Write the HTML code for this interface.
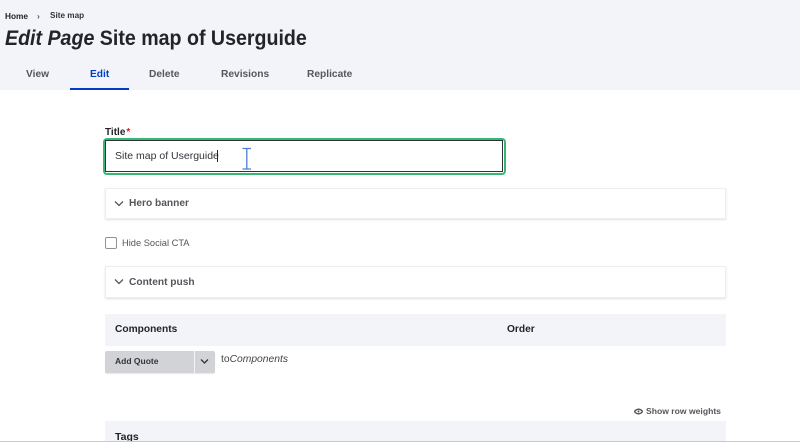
<!DOCTYPE html>
<html><head><meta charset="utf-8"><style>
html,body{margin:0;padding:0;width:800px;height:442px;overflow:hidden;background:#fff;font-family:"Liberation Sans",sans-serif;color:#232429}
.a{position:absolute;white-space:nowrap}
.panel{position:absolute;left:105px;width:621px;background:#fff;border:1px solid #eeeef1;box-shadow:0 1px 2px rgba(0,0,0,.12);box-sizing:border-box}
.sum{font-weight:bold;font-size:10.200px;color:#55565b}
.tab{font-weight:bold;font-size:10.200px;color:#55565b;top:69px}
</style></head><body>
<div class="a" style="left:0;top:0;width:800px;height:90px;background:#f3f4f9"></div>
<div class="a" style="left:5px;top:11px;font-size:8.300px;font-weight:bold;color:#232429">Home</div>
<div class="a" style="left:37px;top:11px;font-size:8.500px;font-weight:bold;color:#55565b">›</div>
<div class="a" style="left:50px;top:11px;font-size:8.200px;font-weight:bold;color:#33343a">Site map</div>
<div class="a" style="left:5px;top:24px;font-size:21.500px;line-height:28px;font-weight:bold;color:#232429;transform:scaleX(.912);transform-origin:0 0"><i>Edit Page</i> Site map of Userguide</div>
<div class="a tab" style="left:26px">View</div>
<div class="a tab" style="left:90px;color:#003cc5">Edit</div>
<div class="a tab" style="left:149px">Delete</div>
<div class="a tab" style="left:221px">Revisions</div>
<div class="a tab" style="left:307px">Replicate</div>
<div class="a" style="left:70px;top:88px;width:59px;height:2px;background:#003cc5"></div>

<div class="a" style="left:105px;top:127px;font-size:10px;font-weight:bold;color:#232429">Title<span style="color:#d72222;margin-left:1px">*</span></div>
<div class="a" style="left:103px;top:138px;width:403px;height:37px;box-sizing:border-box;border:2px solid #35b872;border-radius:4px;background:#fff"></div>
<div class="a" style="left:105px;top:140px;width:398px;height:32px;box-sizing:border-box;border:1.500px solid #2f2f35;background:#fff"></div>
<div class="a" style="left:115px;top:150px;font-size:10.500px;color:#33343a">Site map of Userguide</div>
<div class="a" style="left:217px;top:150px;width:1px;height:12px;background:#222"></div>
<svg class="a" style="left:240px;top:147px" width="14" height="24" viewBox="0 0 14 24"><path d="M2.500 1.500H11M2.500 22H11M6.800 1.500V22" stroke="#4d7fd0" stroke-width="1.300" fill="none"/></svg>

<div class="panel" style="top:188px;height:31px"></div>
<svg class="a" style="left:114px;top:200px" width="10" height="8" viewBox="0 0 10 8"><path d="M1 1.500L5 5.500L9 1.500" stroke="#55565b" stroke-width="1.300" fill="none"/></svg>
<div class="a sum" style="left:129px;top:198px">Hero banner</div>

<div class="a" style="left:105px;top:237px;width:12px;height:12px;box-sizing:border-box;border:1px solid #919297;border-radius:2px;background:#fff"></div>
<div class="a" style="left:122px;top:238px;font-size:9.300px;color:#55565b">Hide Social CTA</div>

<div class="panel" style="top:266px;height:32px"></div>
<svg class="a" style="left:114px;top:278px" width="10" height="8" viewBox="0 0 10 8"><path d="M1 1.500L5 5.500L9 1.500" stroke="#55565b" stroke-width="1.300" fill="none"/></svg>
<div class="a sum" style="left:129px;top:277px">Content push</div>

<div class="a" style="left:105px;top:314px;width:621px;height:32px;background:#f3f4f9"></div>
<div class="a" style="left:115px;top:324px;font-size:10.200px;font-weight:bold;color:#232429">Components</div>
<div class="a" style="left:507px;top:324px;font-size:10.200px;font-weight:bold;color:#232429">Order</div>

<div class="a" style="left:105px;top:351px;width:110px;height:22px;background:#d2d3d7;border-radius:2px;box-shadow:0 1px 1px rgba(0,0,0,.1)"></div>
<div class="a" style="left:194px;top:351px;width:1px;height:22px;background:#f3f4f9"></div>
<div class="a" style="left:115px;top:356px;font-size:8.500px;font-weight:bold;color:#33343a">Add Quote</div>
<svg class="a" style="left:200px;top:358px" width="9" height="7" viewBox="0 0 9 7"><path d="M1 1.500L4.500 5L8 1.500" stroke="#33343a" stroke-width="1.300" fill="none"/></svg>
<div class="a" style="left:221px;top:354px;font-size:10.300px;color:#44454a">to<i>Components</i></div>

<svg class="a" style="left:634px;top:408px" width="9" height="7" viewBox="0 0 9 7"><path d="M.5 3.500C2.500 .5 6.500 .5 8.500 3.500C6.500 6.500 2.500 6.500 .5 3.500Z" fill="none" stroke="#55565b" stroke-width="1.400"/><circle cx="4.500" cy="3.500" r="1" fill="#55565b"/></svg>
<div class="a" style="left:646px;top:406px;font-size:8.600px;font-weight:bold;color:#55565b">Show row weights</div>

<div class="a" style="left:105px;top:421px;width:621px;height:21px;background:#f3f4f9"></div>
<div class="a" style="left:115px;top:431px;font-size:10.500px;font-weight:bold;color:#232429">Tags</div>
<div class="a" style="left:0;top:441px;width:800px;height:1px;background:#c9cac9"></div>
</body></html>
